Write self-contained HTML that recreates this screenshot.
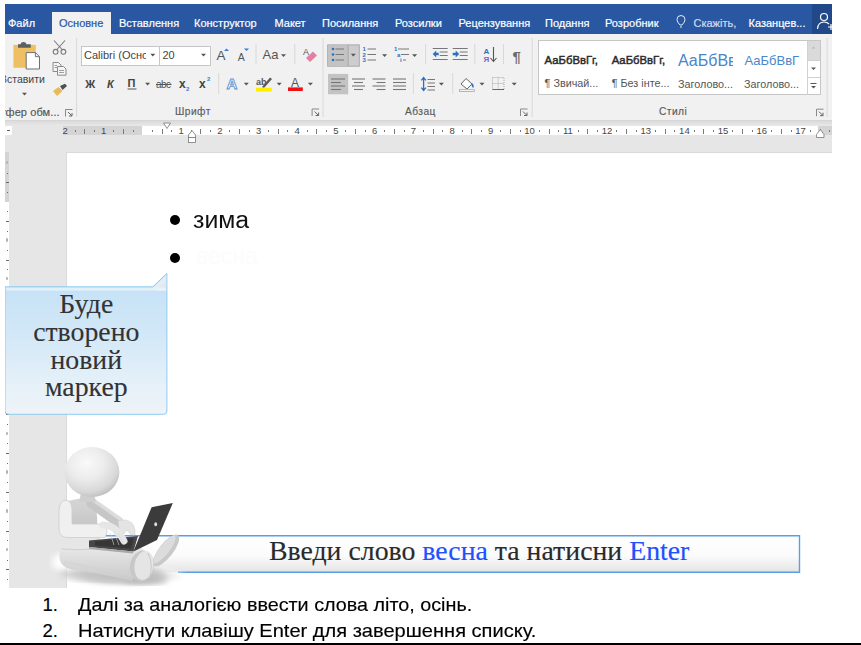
<!DOCTYPE html><html><head><meta charset="utf-8"><style>
*{margin:0;padding:0;box-sizing:border-box}
html,body{width:861px;height:645px;overflow:hidden;background:#fff}
body{position:relative;font-family:"Liberation Sans",sans-serif}
.a{position:absolute}
.t{position:absolute;white-space:nowrap;line-height:1}
.rn{position:absolute;white-space:nowrap;line-height:1;font-size:9.5px;color:#474747;top:125.8px}
.rd{position:absolute;width:1px;height:2px;background:#777;top:130px}
.rt{position:absolute;width:1px;height:4.5px;background:#7a7a7a;top:129px}
svg{position:absolute;left:0;top:0}
</style></head><body>
<div class="a" style="left:5px;top:4px;width:827px;height:30px;background:#2a57a2"></div>
<div class="a" style="left:812px;top:4px;width:20px;height:30px;background:#21498a"></div>
<div class="a" style="left:52px;top:12px;width:59px;height:22px;background:#f1f1f1"></div>
<div class="t" style="left:8.0px;top:18.09px;font-size:11px;color:#fff;font-weight:400;font-family:'Liberation Sans';-webkit-text-stroke:0.2px #fff">Файл</div>
<div class="t" style="left:59.0px;top:18.09px;font-size:11px;color:#2a57a2;font-weight:400;font-family:'Liberation Sans';-webkit-text-stroke:0.2px #2a57a2">Основне</div>
<div class="t" style="left:119.0px;top:18.09px;font-size:11px;color:#fff;font-weight:400;font-family:'Liberation Sans';-webkit-text-stroke:0.2px #fff">Вставлення</div>
<div class="t" style="left:194.0px;top:18.09px;font-size:11px;color:#fff;font-weight:400;font-family:'Liberation Sans';-webkit-text-stroke:0.2px #fff">Конструктор</div>
<div class="t" style="left:274.5px;top:18.09px;font-size:11px;color:#fff;font-weight:400;font-family:'Liberation Sans';-webkit-text-stroke:0.2px #fff">Макет</div>
<div class="t" style="left:322.0px;top:18.09px;font-size:11px;color:#fff;font-weight:400;font-family:'Liberation Sans';-webkit-text-stroke:0.2px #fff">Посилання</div>
<div class="t" style="left:395.0px;top:18.09px;font-size:11px;color:#fff;font-weight:400;font-family:'Liberation Sans';-webkit-text-stroke:0.2px #fff">Розсилки</div>
<div class="t" style="left:458.5px;top:18.09px;font-size:11px;color:#fff;font-weight:400;font-family:'Liberation Sans';-webkit-text-stroke:0.2px #fff">Рецензування</div>
<div class="t" style="left:545.0px;top:18.09px;font-size:11px;color:#fff;font-weight:400;font-family:'Liberation Sans';-webkit-text-stroke:0.2px #fff">Подання</div>
<div class="t" style="left:605.0px;top:18.09px;font-size:11px;color:#fff;font-weight:400;font-family:'Liberation Sans';-webkit-text-stroke:0.2px #fff">Розробник</div>
<div class="t" style="left:693.5px;top:18.09px;font-size:11px;color:#d0dcee;font-weight:400;font-family:'Liberation Sans';-webkit-text-stroke:0.2px #d0dcee">Скажіть,</div>
<div class="t" style="left:748.5px;top:18.09px;font-size:11px;color:#fff;font-weight:400;font-family:'Liberation Sans';-webkit-text-stroke:0.2px #fff">Казанцев...</div>
<div class="a" style="left:5px;top:34px;width:827px;height:86px;background:#f1f1f1"></div>
<div class="a" style="left:5px;top:120px;width:827px;height:1px;background:#d6d6d6"></div>
<div class="a" style="left:5px;top:121px;width:827px;height:467px;background:#e6e6e6"></div>
<div class="a" style="left:5px;top:121px;width:827px;height:4px;background:linear-gradient(#dadada,#e6e6e6)"></div>
<div class="a" style="left:62.7px;top:125.6px;width:79px;height:9.4px;background:#d4d4d4"></div>
<div class="a" style="left:141.8px;top:125.6px;width:676.6px;height:9.4px;background:#fff"></div>
<div class="a" style="left:818.4px;top:125.6px;width:13.6px;height:9.4px;background:#d4d4d4"></div>
<div class="a" style="left:5px;top:125.6px;width:7px;height:9.4px;background:#fff"></div>
<div class="a" style="left:7px;top:130px;width:3px;height:1px;background:#666"></div>
<div class="rn" style="left:62.400000000000006px">2</div>
<div class="rd" style="left:75px"></div>
<div class="rt" style="left:84px"></div>
<div class="rd" style="left:94px"></div>
<div class="rn" style="left:101.10000000000001px">1</div>
<div class="rd" style="left:113px"></div>
<div class="rt" style="left:123px"></div>
<div class="rd" style="left:133px"></div>
<div class="rd" style="left:152px"></div>
<div class="rt" style="left:162px"></div>
<div class="rd" style="left:171px"></div>
<div class="rn" style="left:178.5px">1</div>
<div class="rd" style="left:191px"></div>
<div class="rt" style="left:200px"></div>
<div class="rd" style="left:210px"></div>
<div class="rn" style="left:217.20000000000002px">2</div>
<div class="rd" style="left:229px"></div>
<div class="rt" style="left:239px"></div>
<div class="rd" style="left:249px"></div>
<div class="rn" style="left:255.90000000000003px">3</div>
<div class="rd" style="left:268px"></div>
<div class="rt" style="left:278px"></div>
<div class="rd" style="left:287px"></div>
<div class="rn" style="left:294.6px">4</div>
<div class="rd" style="left:307px"></div>
<div class="rt" style="left:316px"></div>
<div class="rd" style="left:326px"></div>
<div class="rn" style="left:333.3px">5</div>
<div class="rd" style="left:345px"></div>
<div class="rt" style="left:355px"></div>
<div class="rd" style="left:365px"></div>
<div class="rn" style="left:372.0px">6</div>
<div class="rd" style="left:384px"></div>
<div class="rt" style="left:394px"></div>
<div class="rd" style="left:404px"></div>
<div class="rn" style="left:410.70000000000005px">7</div>
<div class="rd" style="left:423px"></div>
<div class="rt" style="left:433px"></div>
<div class="rd" style="left:442px"></div>
<div class="rn" style="left:449.40000000000003px">8</div>
<div class="rd" style="left:462px"></div>
<div class="rt" style="left:471px"></div>
<div class="rd" style="left:481px"></div>
<div class="rn" style="left:488.1px">9</div>
<div class="rd" style="left:500px"></div>
<div class="rt" style="left:510px"></div>
<div class="rd" style="left:520px"></div>
<div class="rn" style="left:524.3px">10</div>
<div class="rd" style="left:539px"></div>
<div class="rt" style="left:549px"></div>
<div class="rd" style="left:558px"></div>
<div class="rn" style="left:563.0px">11</div>
<div class="rd" style="left:578px"></div>
<div class="rt" style="left:587px"></div>
<div class="rd" style="left:597px"></div>
<div class="rn" style="left:601.7px">12</div>
<div class="rd" style="left:616px"></div>
<div class="rt" style="left:626px"></div>
<div class="rd" style="left:636px"></div>
<div class="rn" style="left:640.4000000000001px">13</div>
<div class="rd" style="left:655px"></div>
<div class="rt" style="left:665px"></div>
<div class="rd" style="left:674px"></div>
<div class="rn" style="left:679.1000000000001px">14</div>
<div class="rd" style="left:694px"></div>
<div class="rt" style="left:703px"></div>
<div class="rd" style="left:713px"></div>
<div class="rn" style="left:717.8px">15</div>
<div class="rd" style="left:732px"></div>
<div class="rt" style="left:742px"></div>
<div class="rd" style="left:752px"></div>
<div class="rn" style="left:756.5px">16</div>
<div class="rd" style="left:771px"></div>
<div class="rt" style="left:781px"></div>
<div class="rd" style="left:791px"></div>
<div class="rn" style="left:795.2px">17</div>
<div class="rd" style="left:810px"></div>
<div class="rt" style="left:820px"></div>
<div class="rd" style="left:829px"></div>
<div class="a" style="left:67px;top:153px;width:765px;height:435px;background:#fff"></div>
<div class="a" style="left:66px;top:152px;width:1px;height:436px;background:#dadada"></div>
<div class="a" style="left:66px;top:152px;width:766px;height:1px;background:#dadada"></div>
<div class="a" style="left:5px;top:152px;width:4px;height:50px;background:#d4d4d4"></div>
<div class="a" style="left:5px;top:202px;width:4px;height:386px;background:#fff"></div>
<div class="a" style="left:6px;top:160.8px;width:2px;height:3.5px;background:#b4b4b4;border-radius:1px"></div>
<div class="a" style="left:7px;top:172.5px;width:1px;height:1px;background:#6a6a6a"></div>
<div class="a" style="left:6px;top:182.2px;width:3px;height:1px;background:#6a6a6a"></div>
<div class="a" style="left:7px;top:191.8px;width:1px;height:1px;background:#6a6a6a"></div>
<div class="a" style="left:7px;top:211.2px;width:1px;height:1px;background:#6a6a6a"></div>
<div class="a" style="left:6px;top:220.8px;width:3px;height:1px;background:#6a6a6a"></div>
<div class="a" style="left:7px;top:230.5px;width:1px;height:1px;background:#6a6a6a"></div>
<div class="a" style="left:6px;top:238.2px;width:2px;height:3.5px;background:#b4b4b4;border-radius:1px"></div>
<div class="a" style="left:7px;top:249.9px;width:1px;height:1px;background:#6a6a6a"></div>
<div class="a" style="left:6px;top:259.6px;width:3px;height:1px;background:#6a6a6a"></div>
<div class="a" style="left:7px;top:269.2px;width:1px;height:1px;background:#6a6a6a"></div>
<div class="a" style="left:6px;top:276.9px;width:2px;height:3.5px;background:#b4b4b4;border-radius:1px"></div>
<div class="a" style="left:7px;top:288.6px;width:1px;height:1px;background:#6a6a6a"></div>
<div class="a" style="left:6px;top:298.2px;width:3px;height:1px;background:#6a6a6a"></div>
<div class="a" style="left:7px;top:307.9px;width:1px;height:1px;background:#6a6a6a"></div>
<div class="a" style="left:6px;top:315.6px;width:2px;height:3.5px;background:#b4b4b4;border-radius:1px"></div>
<div class="a" style="left:7px;top:327.3px;width:1px;height:1px;background:#6a6a6a"></div>
<div class="a" style="left:6px;top:337.0px;width:3px;height:1px;background:#6a6a6a"></div>
<div class="a" style="left:7px;top:346.6px;width:1px;height:1px;background:#6a6a6a"></div>
<div class="a" style="left:6px;top:354.3px;width:2px;height:3.5px;background:#b4b4b4;border-radius:1px"></div>
<div class="a" style="left:7px;top:366.0px;width:1px;height:1px;background:#6a6a6a"></div>
<div class="a" style="left:6px;top:375.7px;width:3px;height:1px;background:#6a6a6a"></div>
<div class="a" style="left:7px;top:385.3px;width:1px;height:1px;background:#6a6a6a"></div>
<div class="a" style="left:6px;top:393.0px;width:2px;height:3.5px;background:#b4b4b4;border-radius:1px"></div>
<div class="a" style="left:7px;top:404.7px;width:1px;height:1px;background:#6a6a6a"></div>
<div class="a" style="left:6px;top:414.4px;width:3px;height:1px;background:#6a6a6a"></div>
<div class="a" style="left:7px;top:424.0px;width:1px;height:1px;background:#6a6a6a"></div>
<div class="a" style="left:6px;top:431.7px;width:2px;height:3.5px;background:#b4b4b4;border-radius:1px"></div>
<div class="a" style="left:7px;top:443.4px;width:1px;height:1px;background:#6a6a6a"></div>
<div class="a" style="left:6px;top:453.1px;width:3px;height:1px;background:#6a6a6a"></div>
<div class="a" style="left:7px;top:462.7px;width:1px;height:1px;background:#6a6a6a"></div>
<div class="a" style="left:6px;top:470.4px;width:2px;height:3.5px;background:#b4b4b4;border-radius:1px"></div>
<div class="a" style="left:7px;top:482.1px;width:1px;height:1px;background:#6a6a6a"></div>
<div class="a" style="left:6px;top:491.8px;width:3px;height:1px;background:#6a6a6a"></div>
<div class="a" style="left:7px;top:501.4px;width:1px;height:1px;background:#6a6a6a"></div>
<div class="a" style="left:6px;top:509.1px;width:2px;height:3.5px;background:#b4b4b4;border-radius:1px"></div>
<div class="a" style="left:7px;top:520.8px;width:1px;height:1px;background:#6a6a6a"></div>
<div class="a" style="left:6px;top:530.5px;width:3px;height:1px;background:#6a6a6a"></div>
<div class="a" style="left:7px;top:540.1px;width:1px;height:1px;background:#6a6a6a"></div>
<div class="a" style="left:6px;top:547.8px;width:2px;height:3.5px;background:#b4b4b4;border-radius:1px"></div>
<div class="a" style="left:7px;top:559.5px;width:1px;height:1px;background:#6a6a6a"></div>
<div class="a" style="left:6px;top:569.1px;width:3px;height:1px;background:#6a6a6a"></div>
<div class="a" style="left:7px;top:578.8px;width:1px;height:1px;background:#6a6a6a"></div>
<div class="t" style="left:0.0px;top:74.31px;font-size:10.5px;color:#444;font-weight:400;font-family:'Liberation Sans';">Вставити</div>
<div class="t" style="left:0.0px;top:107.19px;font-size:11px;color:#555;font-weight:400;font-family:'Liberation Sans';letter-spacing:0.1px;-webkit-text-stroke:0.15px #555">уфер обм...</div>
<div class="t" style="left:175.0px;top:107.37px;font-size:10.2px;color:#5a5a5a;font-weight:400;font-family:'Liberation Sans';letter-spacing:0.45px;-webkit-text-stroke:0.15px #5a5a5a">Шрифт</div>
<div class="t" style="left:405.0px;top:107.37px;font-size:10.2px;color:#5a5a5a;font-weight:400;font-family:'Liberation Sans';letter-spacing:0.45px;-webkit-text-stroke:0.15px #5a5a5a">Абзац</div>
<div class="t" style="left:659.0px;top:107.37px;font-size:10.2px;color:#5a5a5a;font-weight:400;font-family:'Liberation Sans';letter-spacing:0.45px;-webkit-text-stroke:0.15px #5a5a5a">Стилі</div>
<div class="a" style="left:81px;top:45.5px;width:79px;height:20.5px;background:#fff;border:1px solid #c6c6c6"></div>
<div class="a" style="left:159px;top:45.5px;width:52px;height:20.5px;background:#fff;border:1px solid #c6c6c6"></div>
<div class="a" style="left:84px;top:47px;width:62px;height:17px;overflow:hidden"><div class="t" style="left:0;top:3.2px;font-size:11px;color:#444">Calibri (Осно</div></div>
<div class="t" style="left:162.5px;top:50.19px;font-size:11px;color:#444;font-weight:400;font-family:'Liberation Sans';">20</div>
<div class="t" style="left:85.3px;top:78.69px;font-size:11px;color:#444;font-weight:700;font-family:'Liberation Sans';">Ж</div>
<div class="t" style="left:107.0px;top:78.69px;font-size:11px;color:#444;font-weight:700;font-family:'Liberation Sans';font-style:italic">К</div>
<div class="t" style="left:127.6px;top:78.19px;font-size:11px;color:#444;font-weight:700;font-family:'Liberation Sans';">П</div>
<div class="t" style="left:156.0px;top:79.53px;font-size:10px;color:#555;font-weight:400;font-family:'Liberation Sans';letter-spacing:-0.5px">abc</div>
<div class="t" style="left:179.0px;top:77.84px;font-size:12px;color:#444;font-weight:700;font-family:'Liberation Sans';">x</div>
<div class="t" style="left:199.0px;top:77.84px;font-size:12px;color:#444;font-weight:700;font-family:'Liberation Sans';">x</div>
<div class="t" style="left:216.5px;top:49.37px;font-size:13.5px;color:#555;font-weight:400;font-family:'Liberation Sans';">A</div>
<div class="t" style="left:237.7px;top:51.91px;font-size:10.5px;color:#555;font-weight:400;font-family:'Liberation Sans';">A</div>
<div class="t" style="left:262.5px;top:48.20px;font-size:13px;color:#555;font-weight:400;font-family:'Liberation Sans';">Aa</div>
<div class="a" style="left:537.5px;top:40.4px;width:283px;height:55px;background:#fff;border:1px solid #c6c6c6"></div>
<div class="a" style="left:807px;top:41px;width:13px;height:19px;background:#dadada"></div>
<div class="a" style="left:807px;top:41px;width:1px;height:54px;background:#d0d0d0"></div>
<div class="a" style="left:807px;top:60px;width:13px;height:1px;background:#d0d0d0"></div>
<div class="a" style="left:807px;top:77px;width:13px;height:1px;background:#d0d0d0"></div>
<div class="t" style="left:544.6px;top:55.13px;font-size:11.3px;color:#2a2a2a;font-weight:400;font-family:'Liberation Sans';-webkit-text-stroke:0.45px #2a2a2a">АаБбВвГг,</div>
<div class="t" style="left:611.7px;top:55.13px;font-size:11.3px;color:#2a2a2a;font-weight:400;font-family:'Liberation Sans';-webkit-text-stroke:0.45px #2a2a2a">АаБбВвГг,</div>
<div class="a" style="left:678px;top:50px;width:54.5px;height:20px;overflow:hidden"><div class="t" style="left:0;top:3.1px;font-size:16px;color:#4a86c8">АаБбВв</div></div>
<div class="t" style="left:744.5px;top:54.10px;font-size:13px;color:#4a86c8;font-weight:400;font-family:'Liberation Sans';">АаБбВвГ</div>
<div class="t" style="left:544.6px;top:78.36px;font-size:10.8px;color:#555;font-weight:400;font-family:'Liberation Sans';">¶ Звичай...</div>
<div class="t" style="left:611.7px;top:78.36px;font-size:10.8px;color:#555;font-weight:400;font-family:'Liberation Sans';">¶ Без інте...</div>
<div class="t" style="left:678.0px;top:78.56px;font-size:10.8px;color:#555;font-weight:400;font-family:'Liberation Sans';">Заголово...</div>
<div class="t" style="left:744.0px;top:78.56px;font-size:10.8px;color:#555;font-weight:400;font-family:'Liberation Sans';">Заголово...</div>
<svg width="861" height="160" viewBox="0 0 861 160"><line x1="76.6" y1="38" x2="76.6" y2="117" stroke="#d8d8d8" stroke-width="1"/><line x1="323" y1="38" x2="323" y2="117" stroke="#d8d8d8" stroke-width="1"/><line x1="532.2" y1="38" x2="532.2" y2="117" stroke="#d8d8d8" stroke-width="1"/><line x1="827.1" y1="38" x2="827.1" y2="117" stroke="#d8d8d8" stroke-width="1"/><line x1="256" y1="44" x2="256" y2="64" stroke="#d8d8d8" stroke-width="1"/><line x1="294.8" y1="44" x2="294.8" y2="64" stroke="#d8d8d8" stroke-width="1"/><line x1="218.7" y1="73" x2="218.7" y2="94" stroke="#d8d8d8" stroke-width="1"/><line x1="425.6" y1="44" x2="425.6" y2="64" stroke="#d8d8d8" stroke-width="1"/><line x1="474.8" y1="44" x2="474.8" y2="64" stroke="#d8d8d8" stroke-width="1"/><line x1="503.5" y1="44" x2="503.5" y2="64" stroke="#d8d8d8" stroke-width="1"/><line x1="413.4" y1="73" x2="413.4" y2="94" stroke="#d8d8d8" stroke-width="1"/><line x1="452.7" y1="73" x2="452.7" y2="94" stroke="#d8d8d8" stroke-width="1"/><rect x="13.4" y="44.9" width="22.4" height="22.9" fill="#eec063"/><path d="M18 47.7 V44.2 H20.5 Q21 42 23.5 42 Q26 42 26.5 44.2 H30.8 V47.7 Z" fill="#5f5f5f"/><path d="M26.2 52.6 H35.4 L39.5 56.7 V69 H26.2 Z" fill="#fff" stroke="#6f6f6f" stroke-width="1"/><path d="M35.4 52.6 V56.7 H39.5" fill="none" stroke="#6f6f6f" stroke-width="1"/><path d="M22 92.8 L27 92.8 L24.5 95.6 Z" fill="#555"/><g stroke="#7a7a7a" stroke-width="1.1" fill="none"><line x1="54" y1="40.5" x2="62.5" y2="50"/><line x1="65" y1="40.5" x2="56.5" y2="50"/><circle cx="55.6" cy="51.8" r="2.4"/><circle cx="63.4" cy="51.8" r="2.4"/></g><g stroke="#8a8a8a" stroke-width="1" fill="#f4f4f4"><path d="M53 62.5 H58.5 L61 65 V71.5 H53 Z"/><path d="M57.5 66.5 H63.5 L66 69 V75.2 H57.5 Z"/></g><g stroke="#8a8a8a" stroke-width="0.8"><line x1="54.5" y1="65.5" x2="57" y2="65.5"/><line x1="54.5" y1="67.5" x2="57" y2="67.5"/><line x1="59" y1="70.5" x2="64" y2="70.5"/><line x1="59" y1="72.5" x2="64" y2="72.5"/></g><path d="M60 86 L65 83.7 L67 86 L62.5 90 Z" fill="#505050"/><path d="M53 91 L58.5 87 L62.5 91 L57 96 Z" fill="#e8b95b"/><path d="M65.5 109.5 H72.5 M65.5 109.5 V116.5" stroke="#888" stroke-width="1" fill="none"/><path d="M68 112 L72 116 M72 113 V116 H69" stroke="#666" stroke-width="1" fill="none"/><path d="M312.1 109.0 H319.1 M312.1 109.0 V116.0" stroke="#888" stroke-width="1" fill="none"/><path d="M314.6 111.5 L318.6 115.5 M318.6 112.5 V115.5 H315.6" stroke="#666" stroke-width="1" fill="none"/><path d="M520.5 109.0 H527.5 M520.5 109.0 V116.0" stroke="#888" stroke-width="1" fill="none"/><path d="M523 111.5 L527 115.5 M527 112.5 V115.5 H524" stroke="#666" stroke-width="1" fill="none"/><path d="M816.5 109.2 H823.5 M816.5 109.2 V116.2" stroke="#888" stroke-width="1" fill="none"/><path d="M819 111.7 L823 115.7 M823 112.7 V115.7 H820" stroke="#666" stroke-width="1" fill="none"/><line x1="127.6" y1="89" x2="136.5" y2="89" stroke="#555" stroke-width="1"/><line x1="156" y1="84.5" x2="171.5" y2="84.5" stroke="#555" stroke-width="1"/><text x="186" y="91" font-size="6" font-family="Liberation Sans" fill="#3b7bd0" font-weight="700">2</text><text x="207" y="80.5" font-size="6" font-family="Liberation Sans" fill="#3b7bd0" font-weight="700">2</text><path d="M224 51 L226.5 48.5 L229 51 Z" fill="#3b7bd0"/><path d="M244 48.5 L249 48.5 L246.5 51 Z" fill="#3b7bd0"/><text x="303" y="55" font-size="9" font-family="Liberation Sans" fill="#555">A</text><path d="M306 58 L313 51.5 L317 55.5 L310 62 Z" fill="#e57fa0"/><text x="226.5" y="89" font-size="15" font-family="Liberation Sans" fill="#ffffff" stroke="#5b8fd2" stroke-width="0.9" font-weight="700">A</text><text x="256" y="85" font-size="9" font-family="Liberation Sans" fill="#555" font-weight="700">ab</text><path d="M262 87 L270 77.5 L272 79 L264 88 Z" fill="#5a5a5a"/><rect x="256" y="87.8" width="15.8" height="3.6" fill="#ffee00"/><text x="291" y="87" font-size="12" font-family="Liberation Sans" fill="#555">A</text><rect x="288" y="87.4" width="14.8" height="3.6" fill="#ee1111"/><rect x="327.7" y="44.9" width="31.6" height="21.3" fill="#cdcdcd" stroke="#a9a9a9" stroke-width="1"/><rect x="328.2" y="45.4" width="20" height="20.3" fill="#c3c3c3"/><line x1="348.2" y1="45" x2="348.2" y2="66" stroke="#a9a9a9"/><circle cx="333" cy="49" r="1.3" fill="#2f6fc0"/><line x1="335.5" y1="49" x2="344" y2="49" stroke="#777" stroke-width="1"/><circle cx="333" cy="54.5" r="1.3" fill="#2f6fc0"/><line x1="335.5" y1="54.5" x2="344" y2="54.5" stroke="#777" stroke-width="1"/><circle cx="333" cy="60" r="1.3" fill="#2f6fc0"/><line x1="335.5" y1="60" x2="344" y2="60" stroke="#777" stroke-width="1"/><text x="362.5" y="51.2" font-size="6" font-family="Liberation Sans" fill="#2f6fc0" font-weight="700">1</text><line x1="367.5" y1="49" x2="376" y2="49" stroke="#777" stroke-width="1"/><text x="362.5" y="56.7" font-size="6" font-family="Liberation Sans" fill="#2f6fc0" font-weight="700">2</text><line x1="367.5" y1="54.5" x2="376" y2="54.5" stroke="#777" stroke-width="1"/><text x="362.5" y="62.2" font-size="6" font-family="Liberation Sans" fill="#2f6fc0" font-weight="700">3</text><line x1="367.5" y1="60" x2="376" y2="60" stroke="#777" stroke-width="1"/><text x="394" y="51" font-size="6" font-family="Liberation Sans" fill="#2f6fc0" font-weight="700">1</text><line x1="398" y1="49" x2="409" y2="49" stroke="#777"/><text x="397" y="56.5" font-size="6" font-family="Liberation Sans" fill="#2f6fc0" font-weight="700">a</text><line x1="401" y1="54.5" x2="409" y2="54.5" stroke="#777"/><text x="400" y="62" font-size="6" font-family="Liberation Sans" fill="#2f6fc0" font-weight="700">i</text><line x1="403" y1="60" x2="406" y2="60" stroke="#777"/><g stroke="#777" stroke-width="1"><line x1="432.7" y1="48.5" x2="447.7" y2="48.5"/><line x1="439.7" y1="52" x2="447.7" y2="52"/><line x1="439.7" y1="55.5" x2="447.7" y2="55.5"/><line x1="432.7" y1="59.5" x2="447.7" y2="59.5"/></g><path d="M432.7 54 L436.2 50.5 V52.8 H438.7 V55.2 H436.2 V57.5 Z" fill="#2f6fc0"/><g stroke="#777" stroke-width="1"><line x1="452.7" y1="48.5" x2="467.7" y2="48.5"/><line x1="459.7" y1="52" x2="467.7" y2="52"/><line x1="459.7" y1="55.5" x2="467.7" y2="55.5"/><line x1="452.7" y1="59.5" x2="467.7" y2="59.5"/></g><path d="M459.2 54 L455.7 50.5 V52.8 H452.7 V55.2 H455.7 V57.5 Z" fill="#2f6fc0"/><text x="483.5" y="54" font-size="8" font-family="Liberation Sans" fill="#2f6fc0" font-weight="700">A</text><text x="483.5" y="61.5" font-size="8" font-family="Liberation Sans" fill="#8b5fc8" font-weight="700">Я</text><path d="M493.5 47 V61 M490.5 58 L493.5 61.5 L496.5 58" stroke="#555" stroke-width="1.1" fill="none"/><text x="512.5" y="61.5" font-size="15" font-family="Liberation Sans" fill="#6a6a6a" font-weight="700">¶</text><rect x="328" y="73.9" width="20.2" height="20.4" fill="#c3c3c3"/><line x1="331" y1="79.0" x2="345" y2="79.0" stroke="#777" stroke-width="1.1"/><line x1="331" y1="82.5" x2="341" y2="82.5" stroke="#777" stroke-width="1.1"/><line x1="331" y1="86.0" x2="345" y2="86.0" stroke="#777" stroke-width="1.1"/><line x1="331" y1="89.5" x2="341" y2="89.5" stroke="#777" stroke-width="1.1"/><line x1="352.0" y1="79.0" x2="365.0" y2="79.0" stroke="#777" stroke-width="1.1"/><line x1="354.0" y1="82.5" x2="363.0" y2="82.5" stroke="#777" stroke-width="1.1"/><line x1="352.0" y1="86.0" x2="365.0" y2="86.0" stroke="#777" stroke-width="1.1"/><line x1="354.0" y1="89.5" x2="363.0" y2="89.5" stroke="#777" stroke-width="1.1"/><line x1="372.5" y1="79.0" x2="385.5" y2="79.0" stroke="#777" stroke-width="1.1"/><line x1="376.5" y1="82.5" x2="385.5" y2="82.5" stroke="#777" stroke-width="1.1"/><line x1="372.5" y1="86.0" x2="385.5" y2="86.0" stroke="#777" stroke-width="1.1"/><line x1="376.5" y1="89.5" x2="385.5" y2="89.5" stroke="#777" stroke-width="1.1"/><line x1="393" y1="79.0" x2="406" y2="79.0" stroke="#777" stroke-width="1.1"/><line x1="393" y1="82.5" x2="406" y2="82.5" stroke="#777" stroke-width="1.1"/><line x1="393" y1="86.0" x2="406" y2="86.0" stroke="#777" stroke-width="1.1"/><line x1="393" y1="89.5" x2="406" y2="89.5" stroke="#777" stroke-width="1.1"/><path d="M423.6 78 V90 M421.3 80.3 L423.6 77.5 L425.9 80.3 M421.3 87.7 L423.6 90.5 L425.9 87.7" stroke="#2f6fc0" stroke-width="1.3" fill="none"/><line x1="427.5" y1="79.5" x2="435" y2="79.5" stroke="#777" stroke-width="1"/><line x1="427.5" y1="83" x2="435" y2="83" stroke="#777" stroke-width="1"/><line x1="427.5" y1="86.5" x2="435" y2="86.5" stroke="#777" stroke-width="1"/><line x1="427.5" y1="90" x2="435" y2="90" stroke="#777" stroke-width="1"/><path d="M461 84 L466 78.5 L472 84 L467 89 Z" fill="#fff" stroke="#666" stroke-width="1"/><path d="M472 83 Q475 86 473 88 Q471 86 472 83 Z" fill="#2f6fc0"/><rect x="459.5" y="89.8" width="15" height="1.8" fill="#fff" stroke="#888" stroke-width="0.6"/><rect x="492.5" y="77.5" width="11.5" height="12" fill="none" stroke="#aaa" stroke-width="1" stroke-dasharray="1 1"/><line x1="498.2" y1="77.5" x2="498.2" y2="89.5" stroke="#aaa" stroke-dasharray="1 1"/><line x1="492.5" y1="83.5" x2="504" y2="83.5" stroke="#aaa" stroke-dasharray="1 1"/><line x1="492.5" y1="89.5" x2="504" y2="89.5" stroke="#666"/><path d="M150.3 53.8 H155.3 L152.8 56.5 Z" fill="#555"/><path d="M201.0 53.8 H206.0 L203.5 56.5 Z" fill="#555"/><path d="M145.1 82.8 H150.1 L147.6 85.5 Z" fill="#555"/><path d="M243.8 82.8 H248.8 L246.3 85.5 Z" fill="#555"/><path d="M276.7 82.8 H281.7 L279.2 85.5 Z" fill="#555"/><path d="M307.9 82.8 H312.9 L310.4 85.5 Z" fill="#555"/><path d="M281.0 54.3 H286.0 L283.5 57.0 Z" fill="#555"/><path d="M350.8 53.8 H355.8 L353.3 56.5 Z" fill="#555"/><path d="M382.1 54.3 H387.1 L384.6 57.0 Z" fill="#555"/><path d="M412.1 54.3 H417.1 L414.6 57.0 Z" fill="#555"/><path d="M438.9 82.8 H443.9 L441.4 85.5 Z" fill="#555"/><path d="M479.5 82.8 H484.5 L482 85.5 Z" fill="#555"/><path d="M511.70000000000005 82.8 H516.7 L514.2 85.5 Z" fill="#555"/><path d="M811.5 48.5 L813.5 46.5 L815.5 48.5" fill="#bbb"/><path d="M811 67.5 H816 L813.5 70 Z" fill="#555"/><line x1="810.5" y1="83.5" x2="816.5" y2="83.5" stroke="#555"/><path d="M811 86 H816 L813.5 88.5 Z" fill="#555"/><g stroke="#e6ecf5" stroke-width="1" fill="none"><path d="M680 25 Q677 22 677 19.5 Q677 15.5 681 15.5 Q685 15.5 685 19.5 Q685 22 682 25 Z"/><line x1="680" y1="27" x2="682" y2="27"/></g><g stroke="#fff" stroke-width="1.2" fill="none"><circle cx="824" cy="17" r="3.5"/><path d="M817.5 29 Q818 22 824 22 Q827 22 829 24"/><path d="M828 27 H834 M831 24 V30"/></g><path d="M163.5 123 H170.5 L167 128.5 Z" fill="#fff" stroke="#777" stroke-width="0.8"/><path d="M188.5 135 L192 130.5 L195.5 135 V137.5 H188.5 Z" fill="#fff" stroke="#777" stroke-width="0.8"/><rect x="188.5" y="137.5" width="7" height="5" fill="#fff" stroke="#777" stroke-width="0.8"/><path d="M816.5 134.5 L820.3 129.5 L824 134.5 V137.5 H816.5 Z" fill="#fff" stroke="#777" stroke-width="0.8"/></svg>
<svg width="861" height="645" viewBox="0 0 861 645"><defs><linearGradient id="cg" x1="0" y1="0" x2="0" y2="1"><stop offset="0" stop-color="#c2e0f6"/><stop offset="0.45" stop-color="#d3e8f7"/><stop offset="0.8" stop-color="#e6f1f9"/><stop offset="1" stop-color="#eef3f6"/></linearGradient><linearGradient id="pg" x1="0" y1="0" x2="1" y2="1"><stop offset="0" stop-color="#f4f8fb"/><stop offset="1" stop-color="#dbe5ec"/></linearGradient><linearGradient id="capg" x1="0" y1="0" x2="0" y2="1"><stop offset="0" stop-color="#ffffff"/><stop offset="0.55" stop-color="#fbfbfb"/><stop offset="1" stop-color="#e4e4e4"/></linearGradient><radialGradient id="hg" cx="0.4" cy="0.32" r="0.72"><stop offset="0" stop-color="#f9f9f9"/><stop offset="0.45" stop-color="#ececec"/><stop offset="0.8" stop-color="#d8d8d8"/><stop offset="1" stop-color="#bdbdbd"/></radialGradient><radialGradient id="sh" cx="0.5" cy="0.5" r="0.5"><stop offset="0" stop-color="#bdbdbd"/><stop offset="0.6" stop-color="#dcdcdc"/><stop offset="1" stop-color="#ffffff" stop-opacity="0"/></radialGradient><linearGradient id="bg1" x1="0" y1="0" x2="1" y2="0"><stop offset="0" stop-color="#f3f3f3"/><stop offset="0.5" stop-color="#e2e2e2"/><stop offset="1" stop-color="#cfcfcf"/></linearGradient><linearGradient id="lg1" x1="0" y1="0" x2="0" y2="1"><stop offset="0" stop-color="#e9e9e9"/><stop offset="1" stop-color="#c9c9c9"/></linearGradient><linearGradient id="tg" x1="0" y1="0" x2="0" y2="1"><stop offset="0" stop-color="#d6d6d6"/><stop offset="1" stop-color="#c2c2c2"/></linearGradient><filter id="bl"><feGaussianBlur stdDeviation="3"/></filter></defs><path d="M5 286.8 H152.8 L166.9 273.4 V411 Q166.9 414.3 163.6 414.3 H8.3 Q5 414.3 5 411 Z" fill="url(#cg)" stroke="#8fcaf0" stroke-width="1"/><path d="M153.5 287.4 L166.3 275 V291 H157 Z" fill="url(#pg)"/><rect x="6" y="287.6" width="160" height="3" fill="#e9f4fb" opacity="0.8"/><rect x="100" y="535.7" width="699.5" height="36.6" fill="url(#capg)"/><path d="M100 535.7 H799.5 V572.3 H178" fill="none" stroke="#5a9ee6" stroke-width="1.4"/><ellipse cx="124" cy="576" rx="66" ry="13" fill="url(#sh)"/><ellipse cx="64" cy="562" rx="12" ry="9" fill="#ffffff" filter="url(#bl)"/><ellipse cx="112" cy="574" rx="52" ry="7" fill="#bdbdbd" opacity="0.75" filter="url(#bl)"/><ellipse cx="145" cy="580" rx="22" ry="5" fill="#b8b8b8" opacity="0.8" filter="url(#bl)"/><ellipse cx="166" cy="550.5" rx="19.5" ry="7" transform="rotate(-52 166 550.5)" fill="#c9c9c9"/><ellipse cx="164.5" cy="549.5" rx="17" ry="4.8" transform="rotate(-52 164.5 549.5)" fill="#dcdcdc"/><path d="M60 550 Q56 567 74 570 Q98 573 132 581 L146 552 Q140 545 132 546 L100 546 Z" fill="url(#lg1)"/><path d="M64 562 Q92 567 131 575" stroke="#d2d2d2" stroke-width="2" fill="none" opacity="0.6"/><ellipse cx="142" cy="566" rx="12" ry="15.5" transform="rotate(10 142 566)" fill="#c8c8c8"/><ellipse cx="144" cy="565.5" rx="9.5" ry="14.5" transform="rotate(10 144 565.5)" fill="#e5e5e5"/><path d="M148 553 Q154 565 149 579" stroke="#cacaca" stroke-width="1" fill="none"/><path d="M60 534 L100 534 L101 548 Q80 551 61 549 Z" fill="#e6e6e6"/><path d="M61 549 Q80 551 101 548" stroke="#cfcfcf" stroke-width="1" fill="none"/><path d="M66 502 Q80 496 95 500 Q98 515 97 534 L70 534 Z" fill="url(#tg)"/><path d="M91 503 L120 524" stroke="#c6c6c6" stroke-width="9.5" stroke-linecap="round"/><path d="M94 500.5 L121 519.5" stroke="#dcdcdc" stroke-width="3.5" stroke-linecap="round"/><path d="M89 540.5 L138 536 L133.4 551.5 L89 547 Z" fill="#474747"/><path d="M95 541.5 L134 538 L131 548.5 L95 545.5 Z" fill="#363636"/><path d="M89 547 L133.4 551.5 L133 553.5 L89 549 Z" fill="#a8a8a8"/><path d="M118 521 Q126 518 132 523 Q136 529 135 535 L131 535 Q129 531 126 530 L124 534 Q120 533 119 529 Z" fill="#e4e4e4" stroke="#c9c9c9" stroke-width="0.5"/><path d="M59 512 Q59 501 66 500 Q72 501 72 510 L72 524 L105 524 Q109 530 105 537.5 L66 537.5 Q59 536 59 529 Z" fill="#f0f0f0" stroke="#cdcdcd" stroke-width="0.8"/><path d="M103 525 Q111 525 116 530 L121 536 L124 541" stroke="#e6e6e6" stroke-width="7" stroke-linecap="round" fill="none"/><g stroke="#d2d2d2" stroke-width="0.6" fill="none"><path d="M110 533 L114 545"/><path d="M114 532 L119 545"/><path d="M118 533 L123 543"/></g><path d="M133.4 551.5 L151.6 507.2 L172.8 503.1 L157 540 Z" fill="#3b3b3b"/><ellipse cx="155.7" cy="524.3" rx="1.4" ry="2" fill="#e0e0e0"/><path d="M81 493 H94 L96 502 H79 Z" fill="#cfcfcf"/><ellipse cx="92" cy="472" rx="27.4" ry="25" fill="url(#hg)"/></svg>
<div class="a" style="left:0;top:0;width:5px;height:600px;background:#fff"></div>
<div class="t" style="left:86.3px;top:290.22px;font-size:27.8px;color:#333;font-weight:400;font-family:'Liberation Serif';transform:translateX(-50%);-webkit-text-stroke:0.12px #333">Буде</div>
<div class="t" style="left:86.3px;top:317.72px;font-size:27.8px;color:#333;font-weight:400;font-family:'Liberation Serif';transform:translateX(-50%);-webkit-text-stroke:0.12px #333">створено</div>
<div class="t" style="left:86.3px;top:345.92px;font-size:27.8px;color:#333;font-weight:400;font-family:'Liberation Serif';transform:translateX(-50%);-webkit-text-stroke:0.12px #333">новий</div>
<div class="t" style="left:86.3px;top:373.32px;font-size:27.8px;color:#333;font-weight:400;font-family:'Liberation Serif';transform:translateX(-50%);-webkit-text-stroke:0.12px #333">маркер</div>
<div class="t" style="left:269.0px;top:537.32px;font-size:27.8px;color:#2a2a2a;font-weight:400;font-family:'Liberation Serif';-webkit-text-stroke:0.15px currentColor">Введи слово <span style="color:#2050ff">весна</span> та натисни <span style="color:#2050ff">Enter</span></div>
<div class="a" style="left:169.5px;top:215px;width:10px;height:10px;border-radius:50%;background:#000"></div>
<div class="a" style="left:169.5px;top:252.5px;width:10px;height:10px;border-radius:50%;background:#000"></div>
<div class="t" style="left:192.5px;top:209.03px;font-size:23px;color:#111;font-weight:400;font-family:'Liberation Sans';transform-origin:0 0;transform:scaleX(1.08)">зима</div>
<div class="t" style="left:196.0px;top:244.53px;font-size:23px;color:#fcfcfc;font-weight:400;font-family:'Liberation Sans';">весна</div>
<div class="t" style="left:42.5px;top:595.94px;font-size:18.5px;color:#000;font-weight:400;font-family:'Liberation Sans';-webkit-text-stroke:0.15px #000">1.</div>
<div class="t" style="left:42.5px;top:622.34px;font-size:18.5px;color:#000;font-weight:400;font-family:'Liberation Sans';-webkit-text-stroke:0.15px #000">2.</div>
<div class="t" style="left:77.6px;top:595.94px;font-size:18.5px;color:#000;font-weight:400;font-family:'Liberation Sans';transform-origin:0 0;transform:scaleX(1.068);-webkit-text-stroke:0.15px #000">Далі за аналогією ввести слова літо, осінь.</div>
<div class="t" style="left:77.6px;top:622.34px;font-size:18.5px;color:#000;font-weight:400;font-family:'Liberation Sans';transform-origin:0 0;transform:scaleX(1.084);-webkit-text-stroke:0.15px #000">Натиснути клавішу Enter для завершення списку.</div>
<div class="a" style="left:0;top:643.3px;width:861px;height:1.7px;background:#000"></div>
</body></html>
